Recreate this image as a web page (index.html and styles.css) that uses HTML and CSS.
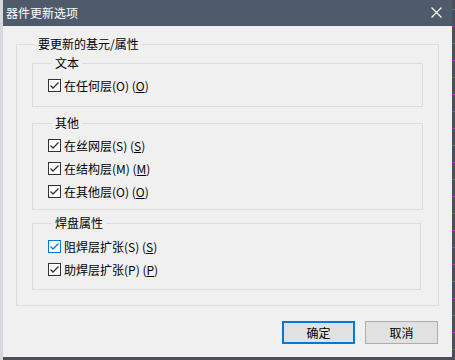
FILE: index.html
```html
<!DOCTYPE html>
<html lang="zh-CN">
<head>
<meta charset="utf-8">
<title>器件更新选项</title>
<link rel="stylesheet" href="styles.css">
</head>
<body>
<div class="screen">
  <div class="window">
    <div class="titlebar">
      <span class="title">器件更新选项</span>
      <svg class="close" width="11" height="11" viewBox="0 0 11 11"><path d="M0.5 0.5 L10.5 10.5 M10.5 0.5 L0.5 10.5" stroke="#fff" stroke-width="1.2" fill="none"/></svg>
    </div>
    <div class="content">
      <fieldset class="group outer">
        <legend class="outer-legend">要更新的基元/属性</legend>
        <fieldset class="group inner g1">
          <legend>文本</legend>
          <label class="check"><span class="box"><svg width="11" height="11" viewBox="0 0 11 11"><path d="M1.5 5.5 L4 8 L9.5 2.5" class="tick"/></svg></span><span>在任何层(O) (<u>O</u>)</span></label>
        </fieldset>
        <fieldset class="group inner g2">
          <legend>其他</legend>
          <label class="check"><span class="box"><svg width="11" height="11" viewBox="0 0 11 11"><path d="M1.5 5.5 L4 8 L9.5 2.5" class="tick"/></svg></span><span>在丝网层(S) (<u>S</u>)</span></label>
          <label class="check"><span class="box"><svg width="11" height="11" viewBox="0 0 11 11"><path d="M1.5 5.5 L4 8 L9.5 2.5" class="tick"/></svg></span><span>在结构层(M) (<u>M</u>)</span></label>
          <label class="check"><span class="box"><svg width="11" height="11" viewBox="0 0 11 11"><path d="M1.5 5.5 L4 8 L9.5 2.5" class="tick"/></svg></span><span>在其他层(O) (<u>O</u>)</span></label>
        </fieldset>
        <fieldset class="group inner g3">
          <legend>焊盘属性</legend>
          <label class="check"><span class="box focus"><svg width="11" height="11" viewBox="0 0 11 11"><path d="M1.5 5.5 L4 8 L9.5 2.5" class="tick"/></svg></span><span>阻焊层扩张(S) (<u>S</u>)</span></label>
          <label class="check"><span class="box"><svg width="11" height="11" viewBox="0 0 11 11"><path d="M1.5 5.5 L4 8 L9.5 2.5" class="tick"/></svg></span><span>助焊层扩张(P) (<u>P</u>)</span></label>
        </fieldset>
      </fieldset>
      <div class="buttons">
        <button class="btn primary">确定</button>
        <button class="btn">取消</button>
      </div>
    </div>
  </div>
</div>
</body>
</html>
```

FILE: styles.css
```css
html, body {
  margin: 0;
  padding: 0;
}
body {
  width: 455px;
  height: 360px;
  overflow: hidden;
  background: #4b5058;
  font-family: "Noto Sans CJK SC", "Microsoft YaHei", sans-serif;
  font-size: 12px;
  color: #000;
}
.screen {
  display: flex;
  height: 360px;
  padding-left: 3px;
  box-sizing: border-box;
  background:
    linear-gradient(to right, #d8d8dc 0 3px, transparent 3px),
    repeating-linear-gradient(to bottom, #4b5058 0 9px, #c030c0 9px 10px, #4b5058 10px 17px);
}
.window {
  width: 449px;
  height: 357px;
  background: #f0f0f0;
  display: flex;
  flex-direction: column;
}
.titlebar {
  height: 26px;
  flex: 0 0 26px;
  background: #4f5b6b;
  display: flex;
  align-items: center;
  justify-content: space-between;
  padding: 0 10px 1px 3px;
  box-sizing: border-box;
}
.title {
  color: #fff;
  font-size: 12px;
  line-height: 16px;
}
.close {
  display: block;
}
.content {
  padding: 10px 13px 0 13px;
}
.group {
  margin: 0;
  border: 1px solid #dcdcdc;
  min-width: 0;
}
.group legend {
  padding: 0 3px;
  margin-left: 4px;
  line-height: 16px;
  height: 16px;
}
.outer {
  padding: 3px 15px 15px 15px;
}
.outer > .outer-legend {
  margin-left: 3px;
}
.inner {
  display: flex;
  flex-direction: column;
}
.g1 {
  padding: 3px 0 9px 15px;
}
.g2 {
  margin-top: 8px;
  padding: 3px 0 6px 15px;
}
.g3 {
  margin-top: 5px;
  margin-right: 2px;
  padding: 4px 0 8px 15px;
}
.check {
  display: flex;
  align-items: center;
  height: 23px;
  line-height: 16px;
}
.box {
  width: 13px;
  height: 13px;
  box-sizing: border-box;
  border: 1px solid #333;
  background: #fff;
  margin-right: 3px;
  display: flex;
}
.tick {
  fill: none;
  stroke: #333;
  stroke-width: 1.3;
}
.box.focus {
  border-color: #0078d7;
}
.box.focus .tick {
  stroke: #0078d7;
}
.buttons {
  display: flex;
  justify-content: flex-end;
  gap: 10px;
  margin-top: 15px;
  padding-right: 1px;
}
.btn {
  width: 73px;
  height: 23px;
  box-sizing: border-box;
  background: #e1e1e1;
  border: 1px solid #adadad;
  font-family: "Noto Sans CJK SC", "Microsoft YaHei", sans-serif;
  font-size: 12px;
  line-height: 16px;
  padding: 0;
  color: #000;
}
.btn.primary {
  border: 2px solid #0078d7;
}
```
